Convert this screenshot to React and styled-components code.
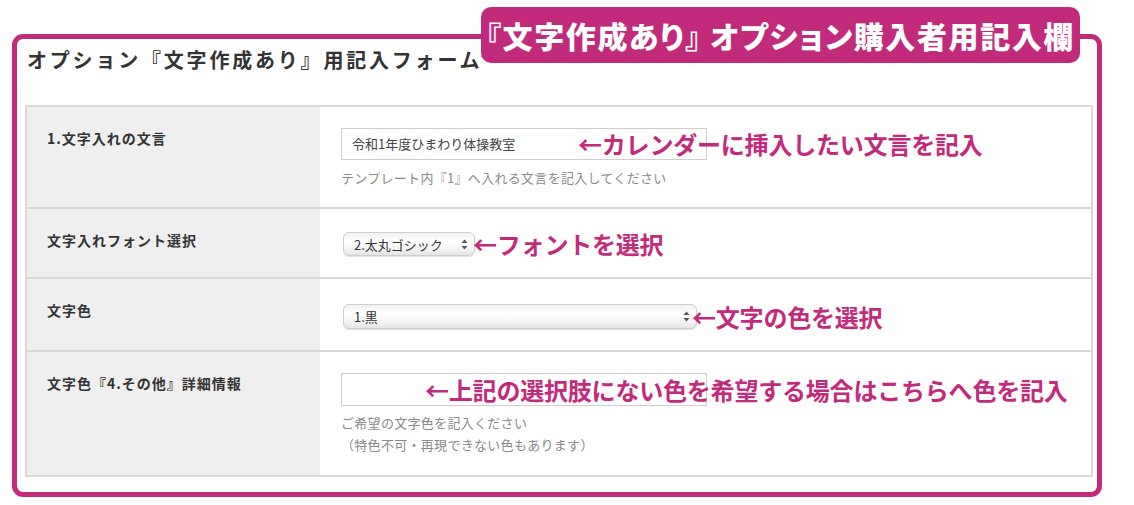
import React from "react";
import styled, { createGlobalStyle } from "styled-components";

const PINK = "#c22b7c";

const Global = createGlobalStyle`
  html, body { margin: 0; padding: 0; background: #fff; }
  body { font-family: "Noto Sans CJK JP", "Noto Sans", sans-serif; color: #333; }
`;

const Page = styled.div`
  width: 1134px;
  height: 505px;
  box-sizing: border-box;
  padding: 34px 0 0 12px;
`;

const Frame = styled.section`
  position: relative;
  box-sizing: border-box;
  width: 1090px;
  border: 5px solid ${PINK};
  border-radius: 11px;
  padding: 7px 4px 15px 8px;
`;

const Badge = styled.div`
  position: absolute;
  left: 464px;
  top: -32px;
  width: 599px;
  height: 56px;
  box-sizing: border-box;
  background: ${PINK};
  border-radius: 10px;
  color: #fff;
  font-size: 30px;
  font-weight: 900;
  line-height: 56px;
  text-align: center;
  white-space: nowrap;
  font-feature-settings: "palt";
  letter-spacing: 1.6px;
`;

const Gap = styled.span`
  display: inline-block;
  width: 8px;
`;

const Title = styled.h2`
  margin: 0 0 31px 2px;
  font-size: 20px;
  line-height: 28px;
  font-weight: 700;
  color: #333;
  letter-spacing: 2.8px;
`;

const Table = styled.div`
  display: grid;
  grid-template-columns: 293px 1fr;
  border: 2px solid #d8d8d8;
  border-bottom-width: 0;
`;

const Label = styled.div`
  background: #efefef;
  padding: 21px 10px 0 20px;
  font-size: 14px;
  line-height: 20px;
  font-weight: 700;
  color: #333;
  letter-spacing: 1px;
  border-bottom: 2px solid #d8d8d8;
`;

const Cell = styled.div`
  padding: ${(p) => p.$pt || 21}px 20px 19px 21px;
  border-bottom: 2px solid #d8d8d8;
  background: #fff;
`;

const FieldWrap = styled.div`
  position: relative;
  display: flex;
  align-items: center;
`;

const TextBox = styled.div`
  box-sizing: border-box;
  width: 366px;
  height: ${(p) => p.$h || 32}px;
  border: 1px solid #cfcfcf;
  background: #fff;
  padding: 0 10px;
  font-size: 13px;
  line-height: ${(p) => (p.$h || 32) - 2}px;
  color: #444;
`;

const Help = styled.div`
  margin-top: ${(p) => p.$mt || 8}px;
  font-size: 13px;
  line-height: ${(p) => p.$lh || 20}px;
  color: #8a8a8a;
  letter-spacing: 0.3px;
`;

const Select = styled.div`
  box-sizing: border-box;
  margin: 2px 0 2px 2px;
  width: ${(p) => p.$w}px;
  height: ${(p) => p.$h || 24}px;
  border: 1px solid #cdcdcd;
  border-radius: 6px;
  background: linear-gradient(to bottom, #f1f1f1 0%, #ffffff 35%, #f6f6f6 70%, #e4e4e4 100%);
  box-shadow: 0 1px 1px rgba(0, 0, 0, 0.12);
  display: flex;
  align-items: center;
  justify-content: space-between;
  padding: 0 6px 0 10px;
  font-size: 13px;
  color: #333;
`;

const Note = styled.span`
  color: ${PINK};
  font-size: 24px;
  font-weight: 700;
  line-height: 24px;
  white-space: nowrap;
  letter-spacing: -0.2px;
  margin-left: ${(p) => p.$ml || 0}px;
`;

const OverNote = styled(Note)`
  position: absolute;
  left: ${(p) => p.$left}px;
  top: 50%;
  transform: translateY(-50%);
`;

const Arrows = () => (
  <svg width="7" height="11" viewBox="0 0 7 11" aria-hidden="true">
    <path d="M3.5 0.5 L6.5 4 L0.5 4 Z" fill="#555" />
    <path d="M3.5 10.5 L6.5 7 L0.5 7 Z" fill="#555" />
  </svg>
);

export default function App() {
  return (
    <>
      <Global />
      <Page>
        <Frame>
          <Badge>
            『文字作成あり』<Gap />オプション購入者用記入欄
          </Badge>
          <Title>オプション『文字作成あり』用記入フォーム</Title>
          <Table>
            <Label>1.文字入れの文言</Label>
            <Cell>
              <FieldWrap>
                <TextBox>令和1年度ひまわり体操教室</TextBox>
                <OverNote $left={237}>←カレンダーに挿入したい文言を記入</OverNote>
              </FieldWrap>
              <Help>テンプレート内『1』へ入れる文言を記入してください</Help>
            </Cell>

            <Label>文字入れフォント選択</Label>
            <Cell>
              <FieldWrap>
                <Select $w={132}>
                  <span>2.太丸ゴシック</span>
                  <Arrows />
                </Select>
                <Note $ml={-2}>←フォントを選択</Note>
              </FieldWrap>
            </Cell>

            <Label>文字色</Label>
            <Cell $pt={23}>
              <FieldWrap>
                <Select $w={354} $h={25}>
                  <span>1.黒</span>
                  <Arrows />
                </Select>
                <Note $ml={-5}>←文字の色を選択</Note>
              </FieldWrap>
            </Cell>

            <Label>文字色『4.その他』詳細情報</Label>
            <Cell>
              <FieldWrap>
                <TextBox $h={33} />
                <OverNote $left={84}>←上記の選択肢にない色を希望する場合はこちらへ色を記入</OverNote>
              </FieldWrap>
              <Help $mt={6} $lh={22}>
                ご希望の文字色を記入ください
                <br />
                （特色不可・再現できない色もあります）
              </Help>
            </Cell>
          </Table>
        </Frame>
      </Page>
    </>
  );
}
